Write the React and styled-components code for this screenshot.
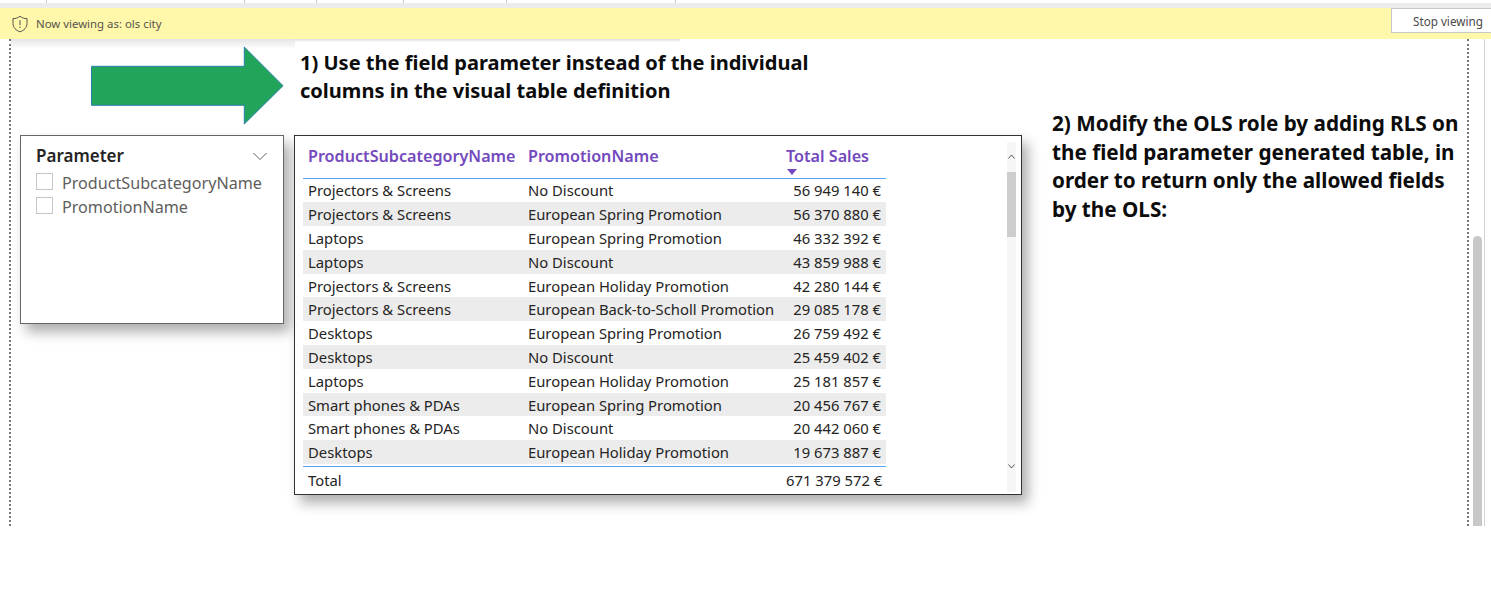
import styled, { createGlobalStyle } from "styled-components";

const GlobalStyle = createGlobalStyle`
  html, body {
    margin: 0;
    background: #fff;
  }
  body {
    font-family: "Noto Sans", "Open Sans", sans-serif;
    color: #252423;
  }
`;

const Page = styled.div`
  width: 1491px;
  height: 609px;
  overflow: hidden;
  background: #fff;
`;

const TabStrip = styled.div`
  height: 3px;
  background: #fff;
  border-bottom: 5px solid #ececec;
  display: flex;
  padding-left: 46px;
`;

const TabTick = styled.span`
  width: ${(p) => p.$w}px;
  height: 3px;
  border-right: 1px solid #c8c8c8;
`;

const Banner = styled.div`
  position: relative;
  z-index: 2;
  height: 31px;
  background: #fff7a9;
  display: flex;
  align-items: center;
  padding-left: 12px;
  font-size: 11.4px;
  color: #55534f;

  &::before {
    content: "";
    position: absolute;
    top: 100%;
    left: 11px;
    width: 284px;
    height: 10px;
    background: linear-gradient(rgba(0, 0, 0, 0.1), rgba(0, 0, 0, 0));
  }
  &::after {
    content: "";
    position: absolute;
    top: 100%;
    left: 295px;
    width: 385px;
    height: 3px;
    background: linear-gradient(rgba(0, 0, 0, 0.14), rgba(0, 0, 0, 0));
  }
`;

const BannerText = styled.span`
  margin-left: 8px;
  flex: 1;
`;

const StopButton = styled.button`
  align-self: flex-start;
  width: 100px;
  height: 25px;
  background: #fff;
  border: 1px solid #c9c9c9;
  border-right: 0;
  font: inherit;
  font-size: 11.7px;
  color: #4a4a4a;
  padding: 0 0 0 21px;
  text-align: left;
`;

const Body = styled.div`
  display: flex;
  height: 487px;
`;

const Canvas = styled.div`
  width: 1460px;
  margin-left: 9px;
  border-left: 2px dotted #777;
  border-right: 2px dotted #777;
  box-sizing: border-box;
  display: grid;
  grid-template-columns: 264px 728px 1fr;
  grid-template-rows: 96px 360px;
  column-gap: 10px;
  padding-left: 9px;
`;

const ArrowCell = styled.div`
  display: flex;
  justify-content: flex-end;
  padding-top: 7px;
`;

const Heading = styled.h2`
  margin: 10px 0 0 6px;
  font-size: 20.05px;
  line-height: 28px;
  font-weight: 700;
  color: #0c0c0c;
  width: 560px;
`;

const Note = styled.h2`
  grid-column: 3;
  grid-row: 1 / span 2;
  margin: 70px 0 0 20px;
  font-size: 20.7px;
  line-height: 28.6px;
  font-weight: 700;
  color: #0c0c0c;
  width: 420px;
`;

const Visual = styled.section`
  position: relative;
  box-sizing: border-box;
  background: #fff;
  border: 1.5px solid #333;
  box-shadow: 6px 8px 12px rgba(0, 0, 0, 0.32);
`;

const Slicer = styled(Visual)`
  height: 189px;
  padding: 8px 15px;
  border-color: #666;
`;

const SlicerHead = styled.div`
  display: flex;
  justify-content: space-between;
  align-items: center;
  font-size: 17px;
  font-weight: 600;
  line-height: 24px;
  color: #252423;
  margin-bottom: 3px;
`;

const SlicerItem = styled.label`
  display: flex;
  align-items: center;
  height: 24px;
  font-size: 16.15px;
  color: #605e5c;
`;

const CheckBox = styled.span`
  width: 17px;
  height: 17px;
  box-sizing: border-box;
  border: 1px solid #c8c6c4;
  margin: -3px 9px 0 0;
`;

const TableVisual = styled(Visual)`
  width: 728px;
  height: 360px;
  padding: 7.5px 0 0 8px;
`;

const Row = styled.div`
  display: grid;
  grid-template-columns: 220px 258px 105px;
  width: 583px;
  height: 23.8px;
  align-items: center;
  font-size: 14.8px;
  color: #252423;
  background: ${(p) => (p.$odd ? "#ececec" : "#fff")};
`;

const HeaderRow = styled(Row)`
  height: 34px;
  align-items: start;
  border-bottom: 1px solid #5aa5f0;
  box-sizing: content-box;
  font-size: 16.15px;
  line-height: 25px;
  font-weight: 600;
  color: #7349bd;
  position: relative;
`;

const TotalRow = styled(Row)`
  border-top: 1px solid #5aa5f0;
  margin-top: 2px;
  height: 26px;
`;

const Cell = styled.span`
  padding: 0 5px;
  white-space: nowrap;
  text-align: ${(p) => (p.$right ? "right" : "left")};
`;

const SortCaret = styled.span`
  position: absolute;
  left: 484px;
  bottom: 3px;
  width: 0;
  height: 0;
  border-left: 5px solid transparent;
  border-right: 5px solid transparent;
  border-top: 6px solid #7349bd;
`;

const TableScroll = styled.div`
  position: absolute;
  top: 6px;
  right: 5px;
  bottom: 2px;
  width: 9px;
  background: #f6f6f6;
`;

const ScrollThumb = styled.div`
  position: absolute;
  top: 30px;
  left: 0;
  right: 0;
  height: 65px;
  background: #cdcdcd;
`;

const ScrollGlyph = styled.svg`
  position: absolute;
  left: 1px;
  ${(p) => (p.$down ? "bottom: 23px;" : "top: 12px;")}
`;

const PageScroll = styled.div`
  width: 15px;
  position: relative;
  border-right: 1px solid #d4d4d4;
`;

const PageThumb = styled.div`
  position: absolute;
  left: 4px;
  top: 197px;
  bottom: 0;
  width: 9px;
  border-radius: 5px 5px 0 0;
  background: #c8c8c8;
`;

const rows = [
  ["Projectors & Screens", "No Discount", "56 949 140 €"],
  ["Projectors & Screens", "European Spring Promotion", "56 370 880 €"],
  ["Laptops", "European Spring Promotion", "46 332 392 €"],
  ["Laptops", "No Discount", "43 859 988 €"],
  ["Projectors & Screens", "European Holiday Promotion", "42 280 144 €"],
  ["Projectors & Screens", "European Back-to-Scholl Promotion", "29 085 178 €"],
  ["Desktops", "European Spring Promotion", "26 759 492 €"],
  ["Desktops", "No Discount", "25 459 402 €"],
  ["Laptops", "European Holiday Promotion", "25 181 857 €"],
  ["Smart phones & PDAs", "European Spring Promotion", "20 456 767 €"],
  ["Smart phones & PDAs", "No Discount", "20 442 060 €"],
  ["Desktops", "European Holiday Promotion", "19 673 887 €"],
];

function ShieldIcon() {
  return (
    <svg width="16" height="18" viewBox="0 0 16 18" fill="none" stroke="#55534f" strokeWidth="1">
      <path d="M8 1.2 C10 3 12.5 3.6 15 3.6 V8.5 C15 12.5 12 15.5 8 16.8 C4 15.5 1 12.5 1 8.5 V3.6 C3.5 3.6 6 3 8 1.2 Z" />
      <path d="M8 5.2 V10.2 M8 11.6 V13" />
    </svg>
  );
}

function BigArrow() {
  return (
    <svg width="193" height="79" viewBox="0 0 193 79">
      <path
        d="M0.5 20.3 H153.3 V1 L192 39.7 L153.3 78 V59.3 H0.5 Z"
        fill="#22a45a"
        stroke="#2a7fb0"
        strokeWidth="1"
      />
    </svg>
  );
}

export default function App() {
  return (
    <Page>
      <GlobalStyle />
      <TabStrip>
        <TabTick $w={0} />
        <TabTick $w={197} />
        <TabTick $w={71} />
        <TabTick $w={86} />
        <TabTick $w={102} />
        <TabTick $w={168} />
      </TabStrip>
      <Banner>
        <ShieldIcon />
        <BannerText>Now viewing as: ols city</BannerText>
        <StopButton>Stop viewing</StopButton>
      </Banner>
      <Body>
        <Canvas>
          <ArrowCell>
            <BigArrow />
          </ArrowCell>
          <Heading>
            1) Use the field parameter instead of the individual
            <br />
            columns in the visual table definition
          </Heading>
          <Note>
            2) Modify the OLS role by adding RLS on
            <br />
            the field parameter generated table, in
            <br />
            order to return only the allowed fields
            <br />
            by the OLS:
          </Note>
          <Slicer>
            <SlicerHead>
              Parameter
              <svg width="16" height="9" viewBox="0 0 16 9" fill="none" stroke="#605e5c" strokeWidth="1">
                <path d="M1.5 1 L8 7.5 L14.5 1" />
              </svg>
            </SlicerHead>
            <SlicerItem>
              <CheckBox />
              ProductSubcategoryName
            </SlicerItem>
            <SlicerItem>
              <CheckBox />
              PromotionName
            </SlicerItem>
          </Slicer>
          <TableVisual>
            <HeaderRow>
              <Cell>ProductSubcategoryName</Cell>
              <Cell>PromotionName</Cell>
              <Cell>Total Sales</Cell>
              <SortCaret />
            </HeaderRow>
            {rows.map((r, i) => (
              <Row key={i} $odd={i % 2 === 1}>
                <Cell>{r[0]}</Cell>
                <Cell>{r[1]}</Cell>
                <Cell $right>{r[2]}</Cell>
              </Row>
            ))}
            <TotalRow>
              <Cell>Total</Cell>
              <Cell />
              <Cell $right>671 379 572 €</Cell>
            </TotalRow>
            <TableScroll>
              <ScrollGlyph width="7" height="5" viewBox="0 0 7 5" fill="none" stroke="#555">
                <path d="M0.5 4.5 L3.5 1 L6.5 4.5" />
              </ScrollGlyph>
              <ScrollThumb />
              <ScrollGlyph $down width="7" height="5" viewBox="0 0 7 5" fill="none" stroke="#555">
                <path d="M0.5 0.5 L3.5 4 L6.5 0.5" />
              </ScrollGlyph>
            </TableScroll>
          </TableVisual>
        </Canvas>
        <PageScroll>
          <PageThumb />
        </PageScroll>
      </Body>
    </Page>
  );
}
